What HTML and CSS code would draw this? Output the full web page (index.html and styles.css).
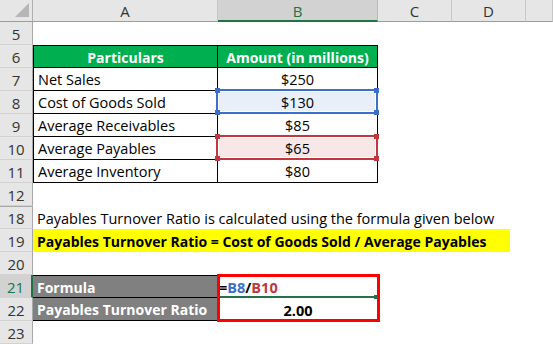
FILE: index.html
```html
<!DOCTYPE html>
<html>
<head>
<meta charset="utf-8">
<link rel="stylesheet" href="styles.css">
</head>
<body>
<div class="sheet">
  <!-- column headers -->
  <div class="ch corner"><span class="tri"></span></div>
  <div class="ch">A</div>
  <div class="ch sel">B</div>
  <div class="ch">C</div>
  <div class="ch">D</div>
  <div class="ch last"></div>

  <!-- row 5 -->
  <div class="rh">5</div>
  <div class="c"></div><div class="c"></div><div class="c"></div><div class="c"></div><div class="c"></div>

  <!-- row 6 -->
  <div class="rh">6</div>
  <div class="c t thead tl top">Particulars</div>
  <div class="c t thead top">Amount (in millions)</div>
  <div class="c"></div><div class="c"></div><div class="c"></div>

  <!-- row 7 -->
  <div class="rh">7</div>
  <div class="c t tl">Net Sales</div>
  <div class="c t num">$250</div>
  <div class="c"></div><div class="c"></div><div class="c"></div>

  <!-- row 8 -->
  <div class="rh">8</div>
  <div class="c t tl">Cost of Goods Sold</div>
  <div class="c t num ref blue"><span class="rb"></span><span class="v">$130</span><i class="h h1"></i><i class="h h2"></i><i class="h h3"></i><i class="h h4"></i></div>
  <div class="c"></div><div class="c"></div><div class="c"></div>

  <!-- row 9 -->
  <div class="rh">9</div>
  <div class="c t tl">Average Receivables</div>
  <div class="c t num">$85</div>
  <div class="c"></div><div class="c"></div><div class="c"></div>

  <!-- row 10 -->
  <div class="rh">10</div>
  <div class="c t tl">Average Payables</div>
  <div class="c t num ref red"><span class="rb"></span><span class="v">$65</span><i class="h h1"></i><i class="h h2"></i><i class="h h3"></i><i class="h h4"></i></div>
  <div class="c"></div><div class="c"></div><div class="c"></div>

  <!-- row 11 -->
  <div class="rh">11</div>
  <div class="c t tl">Average Inventory</div>
  <div class="c t num">$80</div>
  <div class="c"></div><div class="c"></div><div class="c"></div>

  <!-- row 12 -->
  <div class="rh">12</div>
  <div class="c"></div><div class="c"></div><div class="c"></div><div class="c"></div><div class="c"></div>

  <!-- row 18 -->
  <div class="rh hid">18</div>
  <div class="c span">Payables Turnover Ratio is calculated using the formula given below</div>

  <!-- row 19 -->
  <div class="rh">19</div>
  <div class="c span yellow"><span class="ytext">Payables Turnover Ratio = Cost of Goods Sold / Average Payables</span></div>

  <!-- row 20 -->
  <div class="rh">20</div>
  <div class="c"></div><div class="c"></div><div class="c"></div><div class="c"></div><div class="c"></div>

  <!-- row 21 -->
  <div class="rh act">21</div>
  <div class="c gray top">Formula</div>
  <div class="c formula">=<span class="fb">B8</span>/<span class="fr">B10</span><i class="gl"></i><i class="gsq"></i><i class="redbox"></i></div>
  <div class="c"></div><div class="c"></div><div class="c"></div>

  <!-- row 22 -->
  <div class="rh">22</div>
  <div class="c gray">Payables Turnover Ratio</div>
  <div class="c result">2.00</div>
  <div class="c"></div><div class="c"></div><div class="c"></div>

  <!-- row 23 -->
  <div class="rh">23</div>
  <div class="c"></div><div class="c"></div><div class="c"></div><div class="c"></div><div class="c"></div>
</div>
</body>
</html>
```

FILE: styles.css
```css
html, body {
  margin: 0;
  padding: 0;
  background: #fff;
}
.sheet {
  display: grid;
  grid-template-columns: 33px 185px 160px 74px 74px 27px;
  grid-template-rows: 22px repeat(14, 23px);
  width: 553px;
  height: 344px;
  overflow: hidden;
  font-family: "Open Sans", "Liberation Sans", Arial, sans-serif;
  font-size: 14.5px;
  color: #000;
}
.ch {
  box-sizing: border-box;
  background: #e6e6e6;
  border-right: 1px solid #c6c6c6;
  border-bottom: 1px solid #9c9c9c;
  display: flex;
  align-items: center;
  justify-content: center;
  color: #333;
  font-size: 15px;
  padding-top: 1px;
}
.ch.sel {
  background: #d2d2d2;
  color: #217346;
  border-bottom: 2px solid #217346;
  border-right-color: #b8b8b8;
}
.ch.corner {
  position: relative;
  border-right: 1px solid #b0b0b0;
}
.tri {
  position: absolute;
  right: 3px;
  bottom: 4px;
  width: 0;
  height: 0;
  border-left: 14px solid transparent;
  border-bottom: 14px solid #b6b6b6;
}
.rh {
  box-sizing: border-box;
  background: #e6e6e6;
  border-right: 1px solid #a8a8a8;
  border-bottom: 1px solid #d2d2d2;
  display: flex;
  align-items: center;
  justify-content: center;
  color: #333;
  font-size: 15px;
  padding-top: 1px;
}
.rh.hid {
  box-shadow: inset 0 1px 0 #a8a8a8;
}
.rh.act {
  background: #d2d2d2;
  color: #217346;
  border-right: 2px solid #217346;
}
.c {
  box-sizing: border-box;
  display: flex;
  align-items: center;
  white-space: nowrap;
  padding: 1px 4px 0;
  min-width: 0;
}
.t {
  border-right: 1px solid #000;
  border-bottom: 1px solid #000;
}
.tl {
  border-left: 1px solid #000;
}
.top {
  border-top: 1px solid #000;
}
.thead {
  background: #00b050;
  color: #fff;
  font-weight: bold;
  font-size: 14px;
  justify-content: center;
}
.num {
  justify-content: center;
}
.ref {
  position: relative;
  padding: 0;
}
.rb {
  position: absolute;
  left: -2px;
  right: -1px;
  top: -2px;
  bottom: -1px;
  border: 2px solid;
  box-shadow: inset 0 0 0 1px #fff;
}
.ref .v {
  position: relative;
  flex: 1;
  text-align: center;
  padding-top: 1px;
}
.blue .rb {
  border-color: #3b6fc9;
  background: #e9eff8;
}
.red .rb {
  border-color: #c1363f;
  background: #f8e7e7;
}
.h {
  position: absolute;
  width: 5px;
  height: 5px;
}
.blue .h { background: #3b6fc9; }
.red .h { background: #c1363f; }
.h1 { left: -3px; top: -3px; }
.h2 { right: -2px; top: -3px; }
.h3 { left: -3px; bottom: -2px; }
.h4 { right: -2px; bottom: -2px; }
.span {
  grid-column: 2 / 7;
}
.yellow {
  padding: 0;
}
.ytext {
  background: #ffff00;
  font-weight: bold;
  font-size: 14px;
  height: 100%;
  display: flex;
  align-items: center;
  padding: 1px 4px 0;
  box-sizing: border-box;
  width: 477px;
}
.gray {
  background: #808080;
  color: #fff;
  font-weight: bold;
  font-size: 14px;
  border-bottom: 1px solid #000;
}
.formula {
  position: relative;
  font-weight: bold;
  padding-left: 1px;
}
.fb { color: #3b6fc9; }
.fr { color: #c1363f; }
.gl {
  position: absolute;
  left: 2px;
  right: 4px;
  bottom: 0;
  height: 2px;
  background: #217346;
}
.gsq {
  position: absolute;
  right: 1px;
  bottom: -1px;
  width: 3px;
  height: 4px;
  background: #217346;
}
.result {
  font-weight: bold;
  justify-content: center;
}
.redbox {
  position: absolute;
  left: -1px;
  top: -1px;
  right: -2px;
  bottom: -24px;
  border: 3px solid #ff0000;
  pointer-events: none;
}
```
